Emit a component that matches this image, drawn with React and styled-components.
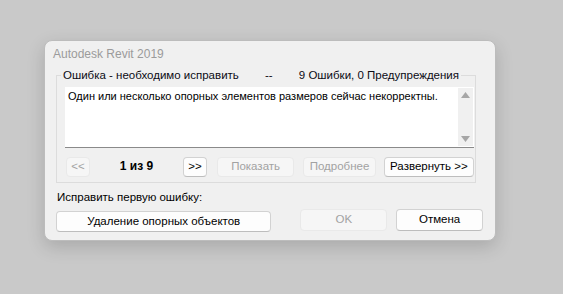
import React from "react";
import styled, { createGlobalStyle } from "styled-components";

const Global = createGlobalStyle`
  html, body { margin: 0; padding: 0; }
  body {
    background: #c9c9c9;
    font-family: "Liberation Sans", Arial, sans-serif;
    font-size: 11.5px;
    color: #000;
  }
`;

const Page = styled.div`
  width: 563px;
  height: 294px;
  box-sizing: border-box;
  padding: 40px 0 0 44px;
`;

const Dialog = styled.div`
  width: 452px;
  height: 201px;
  box-sizing: border-box;
  background: #f0f0f0;
  border-radius: 8px;
  border: 1px solid #bcbcbc;
  box-shadow: 0 6px 18px rgba(0, 0, 0, 0.16);
  display: flex;
  flex-direction: column;
`;

const Title = styled.div`
  height: 27px;
  line-height: 27px;
  padding-left: 8px;
  color: #9b9b9b;
  font-size: 12px;
`;

const Body = styled.div`
  padding: 0 12px 0 11px;
  display: flex;
  flex-direction: column;
`;

const Group = styled.fieldset`
  width: 420px;
  box-sizing: border-box;
  margin: 0;
  padding: 0 1px 5px 8px;
  border: 1px solid #dcdcdc;
  min-inline-size: 0;
`;

const Legend = styled.legend`
  width: 400px;
  box-sizing: border-box;
  margin-left: -4px;
  padding: 0 2px;
  height: 15px;
  line-height: 15px;
  display: flex;
  justify-content: space-between;
  color: #0b0b14;
  font-size: 11.5px;
`;

const TextBox = styled.div`
  margin-top: 4px;
  height: 61px;
  box-sizing: border-box;
  background: #fff;
  border-bottom: 1px solid #8a8a8a;
  display: flex;
`;

const Message = styled.div`
  flex: 1;
  padding: 1px 3px;
  line-height: 16px;
  font-size: 11px;
  white-space: nowrap;
  overflow: hidden;
`;

const Scroll = styled.div`
  width: 15px;
  margin: 1px 1px 1px 0;
  background: #f0f0f0;
  display: flex;
  flex-direction: column;
  justify-content: space-between;
  align-items: center;
  padding: 4px 0;
  box-sizing: border-box;
`;

const Arrow = styled.svg`
  width: 9px;
  height: 6px;
  display: block;
`;

const ButtonRow = styled.div`
  margin-top: 9px;
  margin-left: 1px;
  display: flex;
  align-items: center;
  height: 20px;
`;

const Btn = styled.button`
  width: ${(p) => p.$w}px;
  height: ${(p) => p.$h || 20}px;
  margin-left: ${(p) => p.$ml || 0}px;
  margin-top: ${(p) => p.$mt || 0}px;
  padding: 0;
  box-sizing: border-box;
  font-family: inherit;
  font-size: 11.5px;
  border-radius: 4px;
  background: ${(p) => (p.disabled ? "#f6f6f6" : "#fdfdfd")};
  color: ${(p) => (p.disabled ? "#a2a2a2" : "#000")};
  border: 1px solid ${(p) => (p.disabled ? "#e9e9e9" : "#d2d2d2")};
  border-bottom-color: ${(p) => (p.disabled ? "#e9e9e9" : "#bdbdbd")};
  line-height: 1;
  display: flex;
  align-items: center;
  justify-content: center;
`;

const Counter = styled.div`
  width: 94px;
  text-align: center;
  font-weight: 700;
  font-size: 12px;
  margin-top: -2px;
`;

const Label = styled.div`
  margin-top: 7px;
  padding-left: 1px;
  height: 14px;
  line-height: 14px;
`;

const BottomRow = styled.div`
  margin-top: 5px;
  display: flex;
  align-items: flex-start;
`;

export default function App() {
  return (
    <>
      <Global />
      <Page>
        <Dialog>
          <Title>Autodesk Revit 2019</Title>
          <Body>
            <Group>
              <Legend>
                <span>Ошибка - необходимо исправить</span>
                <span>--</span>
                <span>9 Ошибки, 0 Предупреждения</span>
              </Legend>
              <TextBox>
                <Message>
                  Один или несколько опорных элементов размеров сейчас некорректны.
                </Message>
                <Scroll>
                  <Arrow viewBox="0 0 9 6">
                    <path d="M4.5 0 L9 6 L0 6 Z" fill="#a6a6a6" />
                  </Arrow>
                  <Arrow viewBox="0 0 9 6">
                    <path d="M0 0 L9 0 L4.5 6 Z" fill="#a6a6a6" />
                  </Arrow>
                </Scroll>
              </TextBox>
              <ButtonRow>
                <Btn $w={24} disabled>&lt;&lt;</Btn>
                <Counter>1 из 9</Counter>
                <Btn $w={24}>&gt;&gt;</Btn>
                <Btn $w={78} $ml={10} disabled>Показать</Btn>
                <Btn $w={73} $ml={9} disabled>Подробнее</Btn>
                <Btn $w={91} $ml={8}>Развернуть &gt;&gt;</Btn>
              </ButtonRow>
            </Group>
            <Label>Исправить первую ошибку:</Label>
            <BottomRow>
              <Btn $w={216} $h={21} $mt={2}>Удаление опорных объектов</Btn>
              <Btn $w={87} $h={22} $ml={29} disabled>OK</Btn>
              <Btn $w={87} $h={22} $ml={9}>Отмена</Btn>
            </BottomRow>
          </Body>
        </Dialog>
      </Page>
    </>
  );
}
